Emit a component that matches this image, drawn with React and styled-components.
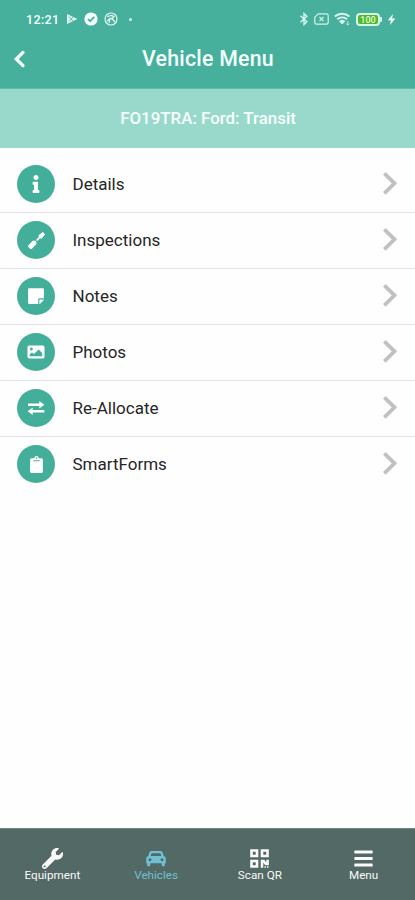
import React from 'react';
import styled, { createGlobalStyle } from 'styled-components';
import {
  FaBars,
  FaClipboard,
  FaInfo,
  FaScrewdriver,
  FaStickyNote,
  FaWrench,
} from 'react-icons/fa';

const GlobalStyle = createGlobalStyle`
  * {
    box-sizing: border-box;
  }

  body {
    margin: 0;
    background: #fefefe;
    font-family: Roboto, 'Liberation Sans', sans-serif;
  }
`;

const Screen = styled.div`
  display: flex;
  flex-direction: column;
  height: 100vh;
  min-height: 900px;
`;

const Header = styled.header`
  height: 88px;
  background: #47b09c;
  color: #f4fffc;
`;

const StatusBar = styled.div`
  display: flex;
  align-items: center;
  justify-content: space-between;
  height: 38px;
  padding: 0 19px 0 26px;
`;

const StatusGroup = styled.div`
  display: flex;
  align-items: center;
  gap: ${(props) => props.gap};
`;

const Clock = styled.span`
  width: 34px;
  font-size: 12.5px;
  font-weight: 500;
  letter-spacing: 0.35px;
  white-space: nowrap;
`;

const Dot = styled.span`
  width: 3px;
  height: 3px;
  margin-left: 5px;
  border-radius: 50%;
  background: #d8f5ee;
`;

const Battery = styled.span`
  display: flex;
  align-items: center;

  &::after {
    content: '';
    width: 2px;
    height: 5px;
    border-radius: 0 1px 1px 0;
    background: #d9f7e8;
  }
`;

const BatteryLevel = styled.span`
  width: 24px;
  height: 13px;
  border: 2px solid #d9f7e8;
  border-radius: 4px;
  background: #4fb92f;
  color: #e4fbd2;
  font-size: 9px;
  font-weight: 500;
  line-height: 10px;
  text-align: center;
`;

const TitleBar = styled.div`
  display: grid;
  grid-template-columns: 40px 1fr 39px;
  align-items: center;
  height: 41px;
`;

const BackButton = styled.button`
  display: flex;
  padding: 1px 0 0 12px;
  border: none;
  background: none;
  color: inherit;
`;

const Title = styled.h1`
  margin: 0;
  font-size: 21.3px;
  font-weight: 500;
  letter-spacing: 0.25px;
  text-align: center;
`;

const VehicleBanner = styled.div`
  display: flex;
  align-items: center;
  justify-content: center;
  height: 60px;
  padding: 0 0 1px 1px;
  background: #99d9cc;
  border-top: 1px solid #62bca9;
  color: #f7fffd;
  font-size: 16.9px;
  font-weight: 500;
`;

const List = styled.ul`
  flex: 1;
  margin: 0;
  padding: 9px 0 0;
  list-style: none;
`;

const Row = styled.li`
  display: flex;
  align-items: center;
  height: 56px;
  padding: 0 17px 1px;
  border-bottom: 1px solid #e3e3e3;
  color: #262626;

  &:last-child {
    border-bottom-color: transparent;
  }
`;

const IconCircle = styled.span`
  display: flex;
  align-items: center;
  justify-content: center;
  width: 38px;
  height: 38px;
  margin-right: 17.5px;
  border-radius: 50%;
  background: #43ae99;
  color: #fff;
  font-size: ${(props) => props.size}px;
`;

const RowLabel = styled.span`
  flex: 1;
  padding-bottom: 1px;
  font-size: 17px;
`;

const TabBar = styled.nav`
  display: grid;
  grid-template-columns: repeat(4, 1fr);
  height: 72px;
  background: #536965;
  border-top: 1px solid #74827f;
`;

const Tab = styled.a`
  display: flex;
  flex-direction: column;
  align-items: center;
  padding: 19px 0 0 1px;
  color: ${(props) => (props.$active ? '#6fc0d2' : '#fafafa')};
  font-size: 11.7px;
  line-height: 13px;
`;

const TabIcon = styled.span`
  display: flex;
  align-items: center;
  height: 21px;
  font-size: ${(props) => props.size}px;
`;

const PlayIcon = () => (
  <svg width="12" height="12" viewBox="0 0 12 12">
    <path d="M1 1v10l10.5-5z" fill="#dcf6ef" />
    <path d="M3 3.5 7 8M3 8.5 7 4" stroke="#47b09c" strokeWidth="0.8" />
  </svg>
);

const CheckIcon = () => (
  <svg width="14" height="14" viewBox="0 0 14 14" fill="none">
    <circle cx="7" cy="7" r="6.6" fill="#f4fffc" />
    <path d="m4 7.1 2.2 2.2 4-4.4" stroke="#47b09c" strokeWidth="1.8" />
  </svg>
);

const BallIcon = () => (
  <svg width="14" height="14" viewBox="0 0 14 14" fill="none" stroke="#e3f8f3">
    <circle cx="7" cy="7" r="6" strokeWidth="1.2" />
    <path d="M3.5 5.2C5 3 8.5 3 10.3 5M3 9l3-2.5 2 .2 3 3.3M6 6.5 5 10.8M8 6.7l2-2.2" strokeWidth="1.3" />
  </svg>
);

const BluetoothIcon = () => (
  <svg width="10" height="14" viewBox="0 0 10 14" fill="none" stroke="#d9f5ee">
    <path d="m1.5 3.8 6.4 6L5 12.5v-11l2.9 2.7-6.4 6" strokeWidth="1.4" />
  </svg>
);

const SimIcon = () => (
  <svg width="15" height="12" viewBox="0 0 15 12" fill="none" stroke="#d4f2eb">
    <path d="M4.2.8h8.3c1 0 1.7.6 1.7 1.6v7.2c0 1-.7 1.6-1.7 1.6h-10C1.5 11.2.8 10.6.8 9.6V4.2z" strokeWidth="1.2" />
    <path d="m5.5 4 4 4.2m0-4.2-4 4.2" strokeWidth="1.2" />
  </svg>
);

const WifiIcon = () => (
  <svg width="17" height="14" viewBox="0 0 17 14" fill="none" stroke="#dcf6ef">
    <path d="M.8 4.5c4.2-3.7 10.5-3.7 14.7 0M3.2 7.3c3-2.5 7-2.5 9.9 0" strokeWidth="1.8" />
    <path d="M5.5 9.3c1.7-1.3 3.7-1.3 5.4 0L8.2 12z" fill="#dcf6ef" />
    <path d="M13.8 9v4M12.3 11.6l1.5 1.5 1.5-1.5" strokeWidth="0.8" />
  </svg>
);

const BoltIcon = () => (
  <svg width="9" height="13" viewBox="0 0 8 12" fill="#f4fffc">
    <path d="M5.3 1 .7 6.7h2.7L2.7 11l4.8-5.9H4.6z" />
  </svg>
);

const BackIcon = () => (
  <svg width="14" height="18" viewBox="0 0 14 18" fill="none">
    <path d="M11 2.4 4.3 9l6.7 6.6" stroke="currentColor" strokeWidth="3.3" strokeLinecap="round" />
  </svg>
);

const ChevronIcon = () => (
  <svg width="16" height="24" viewBox="0 0 16 24" fill="none">
    <path d="m2.3 1.3 10.2 10-10.2 10" stroke="#c1c1c1" strokeWidth="3.8" />
  </svg>
);

const PhotoIcon = () => (
  <svg width="18" height="14" viewBox="0 0 18 14">
    <rect x="0.5" y="0.5" width="17" height="13" rx="1.8" fill="currentColor" />
    <circle cx="4.4" cy="4" r="1.5" fill="#43ae99" />
    <path d="M2.7 11.3V9.2l2.3-1.7 2 1.4 4.6-4.4 3.6 3.4v3.4z" fill="#43ae99" />
  </svg>
);

const SwapIcon = () => (
  <svg width="18" height="16" viewBox="0 0 18 16" fill="currentColor">
    <path d="M1 3.6h11.3V1l5 3.8-5 3.7V6H1z" />
    <path d="M17.3 10.1H5.7V7.5l-5 3.8 5 3.8v-2.6h11.6z" />
  </svg>
);

const CarIcon = () => (
  <svg width="20" height="17" viewBox="0 0 20 17" fill="currentColor" fillRule="evenodd">
    <path d="M6 1h8c1.5 0 2.400.6 2.800 1.900l.9 3.100c1.400.5 2.100 1.500 2.100 2.900v4.300h-1v1.600c0 1-.6 1.600-1.500 1.600s-1.600-.6-1.600-1.600v-1.600H4.300v1.600c0 1-.6 1.600-1.600 1.600s-1.500-.6-1.500-1.600v-1.600h-1V8.900c0-1.400.7-2.400 2.100-2.900l.9-3.100C3.600 1.600 4.500 1 6 1zM6.300 3.200c-.6 0-.9.2-1 .7l-.6 2h10.600l-.6-2c-.1-.5-.5-.7-1-.7zM4 8.200a1.500 1.500 0 1 0 0 3 1.500 1.500 0 0 0 0-3zM16 8.200a1.500 1.500 0 1 0 0 3 1.500 1.500 0 0 0 0-3z" />
  </svg>
);

const QrIcon = () => (
  <svg width="19" height="19" viewBox="0 0 19 19" fill="none" stroke="currentColor">
    <path d="M1.5 1.5h5.5V7H1.500zM12 1.500h5.500V7H12zM1.500 12h5.500v5.500H1.500z" strokeWidth="2.6" />
    <path d="M12 18.8v-6.8h1.7l2.2 3h1.700v-4.300" strokeWidth="2.5" />
    <path d="M14.500 17.900h1.500m1 0h1.500" strokeWidth="1.5" />
  </svg>
);

const menuItems = [
  { label: 'Details', icon: <FaInfo />, size: 18 },
  { label: 'Inspections', icon: <FaScrewdriver />, size: 17 },
  { label: 'Notes', icon: <FaStickyNote />, size: 18 },
  { label: 'Photos', icon: <PhotoIcon />, size: 18 },
  { label: 'Re-Allocate', icon: <SwapIcon />, size: 18 },
  { label: 'SmartForms', icon: <FaClipboard />, size: 17 },
];

const tabs = [
  { label: 'Equipment', icon: <FaWrench />, size: 21 },
  { label: 'Vehicles', icon: <CarIcon />, size: 21 },
  { label: 'Scan QR', icon: <QrIcon />, size: 21 },
  { label: 'Menu', icon: <FaBars />, size: 21 },
];

const App = () => {
  return (
    <Screen>
      <GlobalStyle />
      <Header>
        <StatusBar>
          <StatusGroup gap="6px">
            <Clock>12:21</Clock>
            <PlayIcon />
            <CheckIcon />
            <BallIcon />
            <Dot />
          </StatusGroup>
          <StatusGroup gap="5px">
            <BluetoothIcon />
            <SimIcon />
            <WifiIcon />
            <Battery>
              <BatteryLevel>100</BatteryLevel>
            </Battery>
            <BoltIcon />
          </StatusGroup>
        </StatusBar>
        <TitleBar>
          <BackButton aria-label="Back">
            <BackIcon />
          </BackButton>
          <Title>Vehicle Menu</Title>
        </TitleBar>
      </Header>
      <VehicleBanner>FO19TRA: Ford: Transit</VehicleBanner>
      <List>
        {menuItems.map((item) => (
          <Row key={item.label}>
            <IconCircle size={item.size}>{item.icon}</IconCircle>
            <RowLabel>{item.label}</RowLabel>
            <ChevronIcon />
          </Row>
        ))}
      </List>
      <TabBar>
        {tabs.map((tab) => (
          <Tab key={tab.label} $active={tab.label === 'Vehicles'}>
            <TabIcon size={tab.size}>{tab.icon}</TabIcon>
            {tab.label}
          </Tab>
        ))}
      </TabBar>
    </Screen>
  );
};

export default App;
